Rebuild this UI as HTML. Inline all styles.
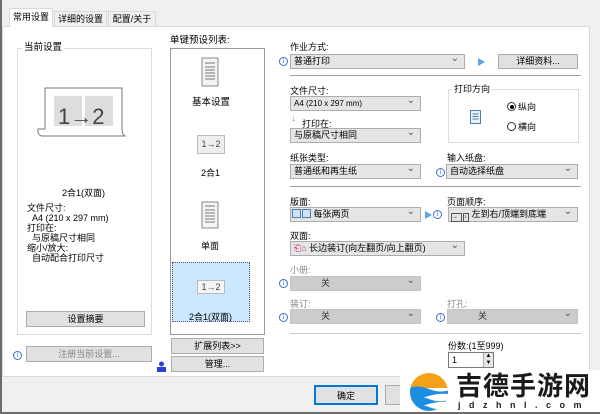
<!DOCTYPE html>
<html><head><meta charset="utf-8"><style>
*{margin:0;padding:0;box-sizing:border-box}
body{width:600px;height:414px;overflow:hidden;background:#f0f0f0;font-family:"Liberation Sans","Noto Sans CJK SC",sans-serif;font-size:9px;color:#000;position:relative}
.a{position:absolute;white-space:nowrap;line-height:12px}
.cb{position:absolute;height:15px;background:#e5e5e5;border:1px solid #adadad;padding-left:3px;line-height:13px;font-size:9px}
.cb:after{content:"⌄";position:absolute;right:5px;top:-3px;color:#555;font-size:10px}
.dis{color:#777;background:#cccccc;border-color:#c4c4c4}
.btn{position:absolute;height:16px;background:#e1e1e1;border:1px solid #adadad;text-align:center;line-height:14px;font-size:9px}
.i{position:absolute;width:9px;height:9px;border:1px solid #3a6fd0;border-radius:50%;color:#3a6fd0;font-size:7px;line-height:7px;text-align:center;font-family:"Liberation Serif",serif}
.sep{position:absolute;height:1px;background:#a0a0a0}
.tri{position:absolute;width:0;height:0;border-left:7px solid #5ba7e8;border-top:4px solid transparent;border-bottom:4px solid transparent}
.g{color:#8a8a8a}
</style></head><body>
<div class="a" style="left:0;top:0;width:2px;height:414px;background:#6b6b6b"></div>
<div class="a" style="left:0;top:412px;width:600px;height:2px;background:#6b6b6b"></div>
<div class="a" style="left:2px;top:26px;width:588px;height:351px;background:#fff;border:1px solid #d9d9d9"></div>
<div class="a" style="left:9px;top:8px;width:44px;height:19px;background:#fff;border:1px solid #d9d9d9;border-bottom:none;line-height:17px;text-align:center">常用设置</div>
<div class="a" style="left:54px;top:11px;width:53px;height:16px;background:#f0f0f0;border:1px solid #d9d9d9;line-height:14px;text-align:center">详细的设置</div>
<div class="a" style="left:108px;top:11px;width:48px;height:16px;background:#f0f0f0;border:1px solid #d9d9d9;line-height:14px;text-align:center">配置/关于</div>
<!-- left panel -->
<div class="a" style="left:17px;top:48px;width:135px;height:287px;border:1px solid #dcdcdc"></div>
<div class="a" style="left:22px;top:42px;background:#fff;padding:0 2px;font-size:9.5px">当前设置</div>
<svg class="a" style="left:36px;top:86px" width="90" height="52"><path d="M9 2H86V44Q86 48 89 50H6Q1 49 2 43H9Z" fill="#fff" stroke="#777"/><rect x="18" y="10" width="28" height="30" fill="#ddd"/><rect x="49" y="10" width="28" height="30" fill="#ddd"/><text x="22" y="38" font-size="22" fill="#444" font-family="Liberation Sans">1→2</text></svg>
<div class="a" style="left:62px;top:187px">2合1(双面)</div>
<div class="a" style="left:27px;top:203px;line-height:10px">文件尺寸:<br>&nbsp;&nbsp;A4 (210 x 297 mm)<br>打印在:<br>&nbsp;&nbsp;与原稿尺寸相同<br>缩小/放大:<br>&nbsp;&nbsp;自动配合打印尺寸</div>
<div class="btn" style="left:26px;top:311px;width:119px">设置摘要</div>
<div class="i" style="left:13px;top:351px">i</div>
<div class="btn dis" style="left:26px;top:346px;width:126px;color:#888">注册当前设置...</div>
<!-- middle -->
<div class="a" style="left:170px;top:48px;width:95px;height:287px;border:1px solid #999;background:#fff"></div>
<div class="a" style="left:170px;top:35px;font-size:9.5px">单键预设列表:</div>
<svg class="a" style="left:201px;top:57px" width="18" height="30"><rect x="1" y="1" width="16" height="28" fill="#f4f4f4" stroke="#888"/><path d="M4 6h10M4 10h10M4 13h10M4 16h10M4 19h10M4 22h10" stroke="#777"/></svg>
<div class="a" style="left:192px;top:97px;font-size:9.5px">基本设置</div>
<div class="a" style="left:197px;top:135px;width:28px;height:19px;border:1px solid #bbb;background:#eee;text-align:center;line-height:17px;font-size:9px;color:#444">1→2</div>
<div class="a" style="left:201px;top:167px">2合1</div>
<svg class="a" style="left:201px;top:201px" width="18" height="28"><rect x="1" y="1" width="16" height="26" fill="#f4f4f4" stroke="#888"/><path d="M4 5h10M4 9h10M4 12h10M4 15h10M4 18h10M4 21h10" stroke="#777"/></svg>
<div class="a" style="left:201px;top:240px">单面</div>
<div class="a" style="left:172px;top:262px;width:78px;height:60px;background:#cce8ff;border:1px dotted #557"></div>
<div class="a" style="left:197px;top:280px;width:28px;height:14px;border:1px solid #bbb;background:#f5f5f5;text-align:center;line-height:12px;color:#444">1→2</div>
<div class="a" style="left:189px;top:311px">2合1(双面)</div>
<div class="btn" style="left:171px;top:338px;width:93px">扩展列表&gt;&gt;</div>
<div class="btn" style="left:171px;top:356px;width:93px">管理...</div>
<svg class="a" style="left:157px;top:361px" width="9" height="11"><circle cx="4.5" cy="3" r="2.5" fill="#2c3fcf"/><rect x="0" y="6" width="9" height="5" fill="#2c3fcf"/></svg>
<!-- right -->
<div class="a" style="left:290px;top:41px">作业方式:</div>
<div class="i" style="left:279px;top:57px">i</div>
<div class="cb" style="left:290px;top:54px;width:175px">普通打印</div>
<div class="tri" style="left:478px;top:58px"></div>
<div class="btn" style="left:498px;top:54px;width:80px;height:15px;line-height:13px">详细资料...</div>
<div class="sep" style="left:290px;top:75px;width:291px"></div>
<div class="a" style="left:290px;top:85px">文件尺寸:</div>
<div class="cb" style="left:290px;top:96px;width:131px;font-size:8px">A4 (210 x 297 mm)</div>
<div class="a" style="left:291px;top:113px;color:#5ba7e8;font-size:10px">↓</div>
<div class="a" style="left:302px;top:118px">打印在:</div>
<div class="cb" style="left:290px;top:128px;width:131px">与原稿尺寸相同</div>
<div class="a" style="left:448px;top:89px;width:131px;height:54px;border:1px solid #dcdcdc"></div>
<div class="a" style="left:452px;top:83px;background:#fff;padding:0 2px">打印方向</div>
<svg class="a" style="left:470px;top:110px" width="11" height="14"><rect x="0.5" y="0.5" width="10" height="13" fill="#e8f1fa" stroke="#4a7fb5"/><path d="M2.5 4h6M2.5 6.5h6M2.5 9h6" stroke="#4a7fb5"/></svg>
<div class="a" style="left:507px;top:102px;width:9px;height:9px;border:1px solid #333;border-radius:50%"><div style="margin:1.5px;width:4px;height:4px;border-radius:50%;background:#000"></div></div>
<div class="a" style="left:518px;top:101px">纵向</div>
<div class="a" style="left:507px;top:122px;width:9px;height:9px;border:1px solid #333;border-radius:50%"></div>
<div class="a" style="left:518px;top:121px">横向</div>
<div class="a" style="left:290px;top:152px">纸张类型:</div>
<div class="cb" style="left:290px;top:164px;width:131px">普通纸和再生纸</div>
<div class="a" style="left:447px;top:152px">输入纸盘:</div>
<div class="i" style="left:436px;top:168px">i</div>
<div class="cb" style="left:446px;top:164px;width:132px">自动选择纸盘</div>
<div class="sep" style="left:290px;top:186px;width:291px"></div>
<div class="a" style="left:290px;top:196px">版面:</div>
<div class="cb" style="left:290px;top:207px;width:131px;padding-left:1px"><span style="display:inline-block;width:9px;height:9px;border:1px solid #4a7fb5;background:#cfe3f7;vertical-align:-1px"></span><span style="display:inline-block;width:9px;height:9px;border:1px solid #4a7fb5;background:#cfe3f7;vertical-align:-1px;margin-left:1px"></span> 每张两页</div>
<div class="tri" style="left:425px;top:211px"></div>
<div class="i" style="left:433px;top:210px">i</div>
<div class="a" style="left:447px;top:196px">页面顺序:</div>
<div class="cb" style="left:448px;top:207px;width:130px;padding-left:2px"><span style="display:inline-block;width:11px;height:9px;border:1px solid #555;vertical-align:-1px;font-size:6px;line-height:7px">→</span><span style="display:inline-block;width:6px;height:9px;border:1px solid #555;vertical-align:-1px;font-size:6px;line-height:7px;margin-left:1px">↓</span> 左到右/顶端到底端</div>
<div class="a" style="left:290px;top:230px">双面:</div>
<div class="cb" style="left:290px;top:241px;width:175px"><span style="color:#c03080">⎗⌂</span> 长边装订(向左翻页/向上翻页)</div>
<div class="a g" style="left:290px;top:264px">小册:</div>
<div class="i" style="left:279px;top:279px">i</div>
<div class="cb dis" style="left:290px;top:276px;width:131px;padding-left:30px;color:#333">关</div>
<div class="a g" style="left:290px;top:298px">装订:</div>
<div class="i" style="left:279px;top:313px">i</div>
<div class="cb dis" style="left:290px;top:309px;width:131px;padding-left:30px;color:#333">关</div>
<div class="a g" style="left:447px;top:298px">打孔:</div>
<div class="i" style="left:436px;top:313px">i</div>
<div class="cb dis" style="left:447px;top:309px;width:131px;padding-left:30px;color:#333">关</div>
<div class="sep" style="left:290px;top:333px;width:291px;background:#c8c8c8"></div>
<div class="a" style="left:448px;top:340px">份数:(1至999)</div>
<div class="a" style="left:448px;top:352px;width:46px;height:16px;border:1px solid #7a7a7a;background:#fff;padding-left:3px;line-height:14px">1</div>
<div class="a" style="left:483px;top:353px;width:10px;height:14px;background:#e5e5e5;border-left:1px solid #aaa;font-size:6px;text-align:center;line-height:7px">▲<br>▼</div>
<!-- bottom -->
<div class="btn" style="left:314px;top:385px;width:64px;height:20px;line-height:18px;border:2px solid #0078d7">确定</div>
<div class="btn" style="left:385px;top:385px;width:30px;height:20px"></div>
<!-- logo -->
<div class="a" style="left:400px;top:370px;width:200px;height:42px;background:#fff"></div>
<svg class="a" style="left:405px;top:372px" width="48" height="40"><defs><clipPath id="c"><circle cx="24" cy="20" r="19"/></clipPath></defs><g clip-path="url(#c)"><rect width="48" height="40" fill="#f6a01a"/><rect y="16" width="48" height="24" fill="#fff"/><path d="M0 17Q12 12 24 17T48 17V23Q36 20 24 24T0 23Z" fill="#1d8fe0"/><path d="M0 26Q12 22 24 27T48 26V31Q36 28 24 32T0 31Z" fill="#1d8fe0"/><path d="M0 34Q12 30 24 35T48 34V40H0Z" fill="#1d8fe0"/></g></svg>
<div class="a" style="left:456px;top:371px;font-size:26px;font-weight:bold;letter-spacing:1px;color:#1a1a1a;line-height:30px">吉德手游网</div>
<div class="a" style="left:458px;top:399px;font-size:9px;letter-spacing:8.5px;color:#222;font-weight:bold">jdzhnl.com</div>
</body></html>
